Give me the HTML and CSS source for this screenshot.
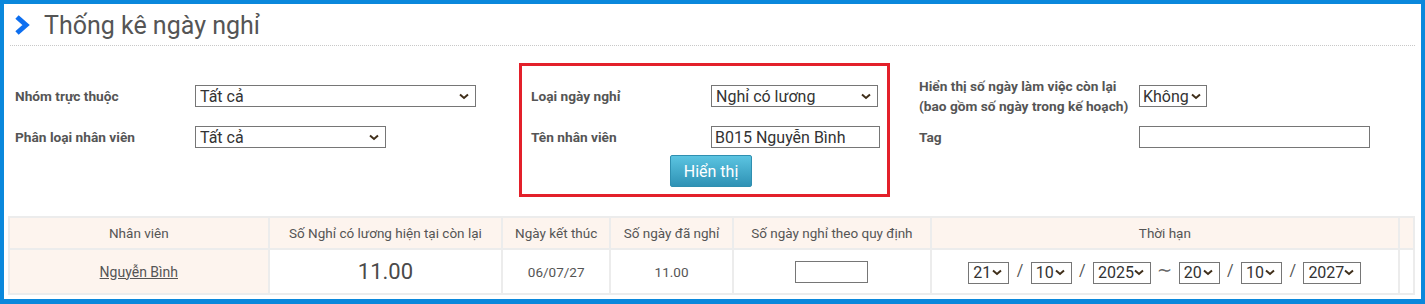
FILE: index.html
```html
<!DOCTYPE html>
<html lang="vi">
<head>
    <meta charset="UTF-8">
    <title>Thống kê ngày nghỉ</title>
    <link rel="stylesheet" href="styles.css">
</head>
<body>
    <div class="title-bar">
        <svg class="chevron" width="18" height="22" viewBox="0 0 18 22">
            <polyline points="4,3 13,11 4,19" fill="none" stroke="#0d6ff0" stroke-width="5"/>
        </svg>
        <h1>Thống kê ngày nghỉ</h1>
    </div>

    <form class="filters">
        <div class="group group-left">
            <div class="grid">
                <label>Nhóm trực thuộc</label>
                <select class="sel-group"><option>Tất cả</option></select>
                <label>Phân loại nhân viên</label>
                <select class="sel-type"><option>Tất cả</option></select>
            </div>
        </div>

        <div class="group group-box">
            <div class="grid">
                <label>Loại ngày nghỉ</label>
                <select class="sel-leave"><option>Nghỉ có lương</option></select>
                <label>Tên nhân viên</label>
                <input class="txt-name" type="text" value="B015 Nguyễn Bình">
            </div>
            <button type="button" class="btn-show">Hiển thị</button>
        </div>

        <div class="group group-right">
            <div class="grid">
                <label>Hiển thị số ngày làm việc còn lại<br>(bao gồm số ngày trong kế hoạch)</label>
                <select class="sel-yesno"><option>Không</option></select>
                <label>Tag</label>
                <input class="txt-tag" type="text">
            </div>
        </div>
    </form>

    <table class="result">
        <thead>
            <tr>
                <th class="c-name">Nhân viên</th>
                <th class="c-remain">Số Nghỉ có lương hiện tại còn lại</th>
                <th class="c-end">Ngày kết thúc</th>
                <th class="c-used">Số ngày đã nghỉ</th>
                <th class="c-rule">Số ngày nghỉ theo quy định</th>
                <th class="c-term">Thời hạn</th>
                <th class="c-extra"></th>
            </tr>
        </thead>
        <tbody>
            <tr>
                <th><a href="#">Nguyễn Bình</a></th>
                <td class="big">11.00</td>
                <td>06/07/27</td>
                <td>11.00</td>
                <td><input class="txt-days" type="text"></td>
                <td class="term">
                    <select class="sel-d"><option>21</option></select>
                    <span class="sep">/</span>
                    <select class="sel-d"><option>10</option></select>
                    <span class="sep">/</span>
                    <select class="sel-y"><option>2025</option></select>
                    <span class="tilde">∼</span>
                    <select class="sel-d"><option>20</option></select>
                    <span class="sep">/</span>
                    <select class="sel-d"><option>10</option></select>
                    <span class="sep">/</span>
                    <select class="sel-y"><option>2027</option></select>
                </td>
                <td></td>
            </tr>
        </tbody>
    </table>
</body>
</html>
```

FILE: styles.css
```css
* {
    box-sizing: border-box;
}

html {
    background: #ffffff;
}

body {
    margin: 0;
    height: 304px;
    border: 4px solid #0a88dc;
    border-bottom-width: 5px;
    padding: 0 6px 0 4px;
    font-family: Roboto, "Noto Sans", sans-serif;
    color: #555555;
    overflow: hidden;
}

/* title */
.title-bar {
    display: flex;
    align-items: center;
    height: 42px;
    padding-top: 1px;
    border-bottom: 1px dotted #c8c8c8;
    margin: 0 0 17px 2px;
}

.chevron {
    margin: 0 13px 0 3px;
}

h1 {
    margin: 0;
    font-size: 25px;
    font-weight: 400;
    color: #555555;
}

/* filters */
.filters {
    display: flex;
    align-items: flex-start;
    padding-left: 7px;
}

.group {
    padding-top: 13px;
}

.grid {
    display: grid;
    grid-template-rows: 40px 32px;
    row-gap: 5px;
    align-items: center;
}

.group-left .grid {
    grid-template-columns: 180px auto;
}

.group-box {
    margin-left: 43px;
    border: 3px solid #e3202a;
    padding: 10px 7px 7px 9px;
}

.group-box .grid {
    grid-template-columns: 180px auto;
}

.group-right {
    margin-left: 29px;
}

.group-right .grid {
    grid-template-columns: 220px auto;
}

label {
    font-size: 13.7px;
    font-weight: 700;
    line-height: 20px;
    color: #555555;
}

select,
input[type="text"] {
    height: 22px;
    font-family: Roboto, "Noto Sans", sans-serif;
    font-size: 16px;
    color: #333333;
    border: 1px solid #767676;
    border-radius: 0;
    background-color: #ffffff;
    padding: 0 3px;
    margin: 0;
}

select {
    -webkit-appearance: none;
    appearance: none;
    padding: 0 16px 0 4px;
    background-image: url("data:image/svg+xml,%3Csvg xmlns='http://www.w3.org/2000/svg' width='10' height='7' viewBox='0 0 10 7'%3E%3Cpolyline points='1,1.5 5,5 9,1.5' fill='none' stroke='%23402f1a' stroke-width='2'/%3E%3C/svg%3E");
    background-repeat: no-repeat;
    background-position: right 6px center;
}

.sel-group { width: 281px; }
.sel-type { width: 191px; }
.sel-leave { width: 167px; }
.txt-name { width: 169px; }
.txt-tag { width: 231px; }

.sel-yesno {
    width: 68px;
    padding: 0 12px 0 3px;
    background-position: right 5px center;
}

.btn-show {
    display: block;
    margin: 2px 0 0 139px;
    width: 82px;
    height: 32px;
    font-family: Roboto, "Noto Sans", sans-serif;
    font-size: 16px;
    color: #ffffff;
    border: 1px solid #2f8fb0;
    border-radius: 2px;
    background: linear-gradient(to bottom, #5bc4e1, #2f92b5);
    cursor: pointer;
}

/* table */
.result {
    margin-top: 19px;
    width: 1407px;
    border-collapse: collapse;
    font-size: 13.5px;
    color: #555555;
}

.result th,
.result td {
    border: 2px solid #ececec;
    text-align: center;
    font-weight: 400;
    padding: 0;
}

.result thead th {
    height: 32px;
    background: #fdf4ee;
}

.result tbody th {
    background: #fdf4ee;
}

.result tbody td,
.result tbody th {
    height: 45px;
}

.result a {
    color: #555555;
    font-size: 14px;
}

.result td.big {
    font-size: 22px;
    color: #4a4a4a;
}

.c-name { width: 260px; }
.c-remain { width: 234px; }
.c-end { width: 108px; }
.c-used { width: 123px; }
.c-rule { width: 198px; }
.c-term { width: 469px; }
.c-extra { width: 15px; }

.txt-days {
    width: 73px;
}

.term select {
    vertical-align: middle;
    padding-right: 14px;
    padding-left: 4px;
}

.sel-d { width: 41px; }
.sel-y { width: 58px; }

.sep {
    margin: 0 4px;
    font-size: 16px;
}

.tilde {
    margin: 0 3px;
    font-size: 18px;
    color: #666666;
}
```
